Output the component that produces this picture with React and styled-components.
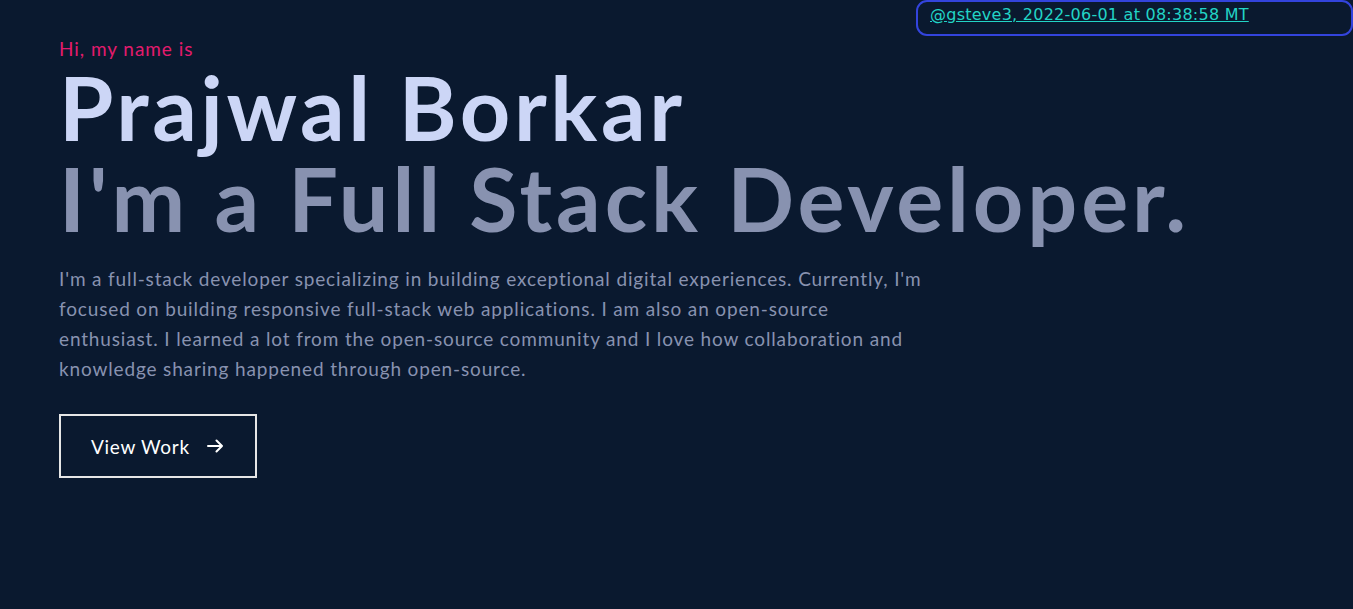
import React from "react";
import styled, { createGlobalStyle } from "styled-components";

const Global = createGlobalStyle`
  html, body { margin: 0; padding: 0; background: #0a192f; }
  body { font-family: "Lato", "Open Sans", sans-serif; }
  * { box-sizing: border-box; }
`;

const Page = styled.main`
  position: relative;
  min-height: 609px;
  background: #0a192f;
  overflow: hidden;
`;

const Hero = styled.section`
  padding: 36px 0 0 59px;
  display: flex;
  flex-direction: column;
  align-items: flex-start;
`;

const Intro = styled.p`
  margin: 0;
  color: #e31b6d;
  font-size: 19px;
  line-height: 26px;
  letter-spacing: 0.95px;
`;

const Title = styled.h1`
  margin: 0;
  font-size: 88px;
  font-weight: 700;
  line-height: 91px;
  letter-spacing: ${(p) => p.$ls};
  color: ${(p) => p.$color};
  white-space: nowrap;
`;

const Bio = styled.p`
  margin: 20px 0 0;
  color: #8892b0;
  font-size: 19px;
  line-height: 30px;
  letter-spacing: 0.85px;
  white-space: nowrap;
`;

const Button = styled.button`
  margin-top: 30px;
  width: 198px;
  height: 64px;
  border: 2px solid #e6e6e6;
  background: transparent;
  color: #ffffff;
  font-family: inherit;
  font-size: 19px;
  letter-spacing: 0.7px;
  display: flex;
  align-items: center;
  padding: 0 0 0 30px;
  gap: 17px;
  cursor: pointer;
`;

const Badge = styled.div`
  position: absolute;
  top: 0;
  left: 916px;
  width: 437px;
  height: 36px;
  border: 2px solid #3344dd;
  border-radius: 11px;
  padding: 2px 0 0 12px;
`;

const BadgeLink = styled.a`
  font-family: "DejaVu Sans", Verdana, sans-serif;
  font-size: 16px;
  letter-spacing: 0.25px;
  color: #22d4c6;
  text-decoration: underline;
`;

const Arrow = () => (
  <svg width="16" height="14" viewBox="0 0 16 14" fill="none" stroke="#fff" strokeWidth="2" strokeLinecap="round" strokeLinejoin="round">
    <path d="M1 7h14M9.5 1.5 15 7l-5.5 5.5" />
  </svg>
);

export default function App() {
  return (
    <Page>
      <Global />
      <Badge>
        <BadgeLink href="#">@gsteve3, 2022-06-01 at 08:38:58 MT</BadgeLink>
      </Badge>
      <Hero>
        <Intro>Hi, my name is</Intro>
        <Title $color="#ccd6f6" $ls="3.6px">Prajwal Borkar</Title>
        <Title $color="#8892b0" $ls="3.9px">I'm a Full Stack Developer.</Title>
        <Bio>
          I'm a full-stack developer specializing in building exceptional digital experiences. Currently, I'm
          <br />
          focused on building responsive full-stack web applications. I am also an open-source
          <br />
          enthusiast. I learned a lot from the open-source community and I love how collaboration and
          <br />
          knowledge sharing happened through open-source.
        </Bio>
        <Button>
          View Work
          <Arrow />
        </Button>
      </Hero>
    </Page>
  );
}
